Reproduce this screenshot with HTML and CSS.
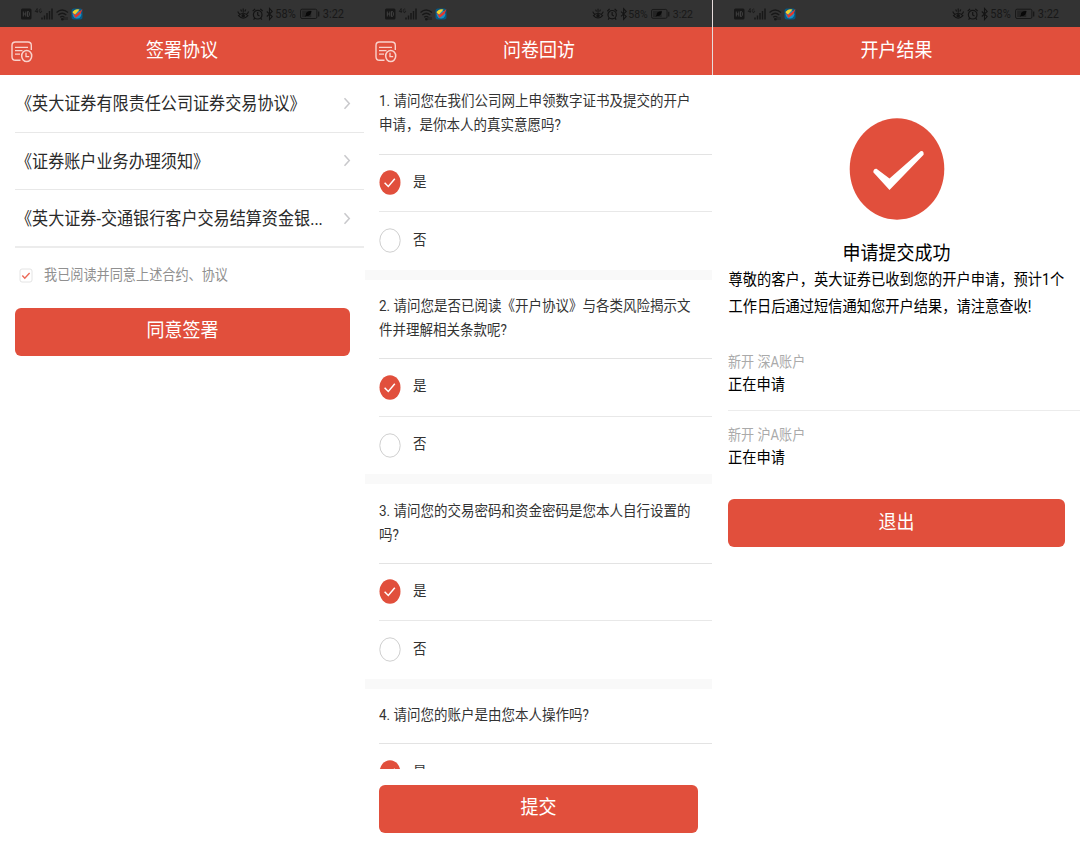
FILE: index.html
```html
<!DOCTYPE html>
<html lang="zh-CN">
<head>
    <meta charset="UTF-8">
    <meta name="viewport" content="width=device-width, initial-scale=1.0">
    <title>开户</title>
    <link rel="stylesheet" href="styles.css">
</head>
<body>

    <!-- shared icons -->
    <svg class="sprite" width="0" height="0">
        <symbol id="icon-network" viewBox="0 0 62 14">
            <rect x="0" y="1.5" width="10.500" height="11" rx="1.500" fill="#181818"/>
            <path d="M2.300 4.500v5M4.800 4.500v5M2.300 7h2.500M6.500 4.500v5h.8c1.500 0 1.500-5 0-5z" fill="none" stroke="#4a4a4a" stroke-width=".8"/>
            <path d="M16.200 1.500v4.500M16.200 1.500l-2 3h2.700M20.300 2.200c-2.200-1.400-2.800 3.200-1 3.400 1.200.1 1.300-.8 1.200-1.600h-1" fill="none" stroke="#181818" stroke-width=".8"/>
            <path d="M21 12.500v-2M23.500 12.500v-4M26 12.500v-6.500M28.500 12.500v-8.500M31 12.500v-11" stroke="#181818" stroke-width="1.500"/>
            <path d="M35.500 5.500q5.500-5 11.500 0M37.300 8q3.900-3.600 8 0M39.200 10.300q2-1.800 4.200 0" fill="none" stroke="#181818" stroke-width="1.300"/>
            <path d="M40.500 11.500h1.800v1.500h-1.800zM44 10v3M46 10v3" fill="#181818" stroke="#181818" stroke-width=".8"/>
            <rect x="50.500" y="1.500" width="11" height="11" rx="2.500" fill="#075a86"/>
            <circle cx="56" cy="7.300" r="4.300" fill="#1b8fc4"/>
            <path d="M51.500 6q1.500-4.500 7-3.500l-4.500 5z" fill="#f2d32c"/>
            <path d="M51.500 5.500l3 2.500 7-6-2 5-5 4z" fill="#e5362b"/>
        </symbol>
        <symbol id="icon-alarm" viewBox="0 0 37 14">
            <path d="M1.500 8.700q4.700-5 9.400 0-4.700 5-9.400 0zM.8 4.500q.6 2 2 2.500M11.600 4.500q-.6 2-2 2.500M3.700 2.500l.9 2M8.700 2.500l-.9 2M6.200 1.500v4" fill="none" stroke="#141414" stroke-width="1.100"/>
            <circle cx="6.200" cy="8.700" r="1.800" fill="#141414"/>
            <circle cx="20.700" cy="7.700" r="4.300" fill="none" stroke="#141414" stroke-width="1.200"/>
            <path d="M20.700 5v3l1.800 1M15.700 4.200l2.400-2.400M25.700 4.200l-2.400-2.400M17.800 11l-1.200 1.700M23.600 11l1.200 1.700" fill="none" stroke="#141414" stroke-width="1.200"/>
            <path d="M29.800 4.500l5.400 5-2.700 3v-11l2.700 3-5.400 5" fill="none" stroke="#141414" stroke-width="1.100"/>
        </symbol>
        <symbol id="icon-battery" viewBox="0 0 20 12">
            <rect x=".6" y="1.200" width="16.300" height="9.300" rx="1.500" fill="none" stroke="#181818"/>
            <path d="M2.200 2.600h9v6.500h-9z" fill="#242424"/>
            <path d="M11.500 3q-6-.2-5.600 4l-1.200 1.800 1.700-.8q4.400.6 5.100-5z" fill="#080808"/>
            <path d="M18.700 3.500v5" stroke="#181818" stroke-width="1.300"/>
        </symbol>
        <symbol id="icon-record" viewBox="0 0 22 22">
            <path d="M9.500 19.200H4.500Q1 19.200 1 15.700V4.500Q1 1 4.500 1h12.300q3.500 0 3.500 3.500V9" fill="none" stroke="#f9d3cd" stroke-width="1.400"/>
            <path d="M4 6.300h13M4 9.700h7.500M4 13.200h5" stroke="#f9d3cd" stroke-width="1.300"/>
            <ellipse cx="15.700" cy="15" rx="5" ry="5.500" fill="none" stroke="#f9d3cd" stroke-width="1.500"/>
            <path d="M15 11.800v3.800h3.200" fill="none" stroke="#f9d3cd" stroke-width="1.300"/>
        </symbol>
        <symbol id="icon-arrow" viewBox="0 0 8 13">
            <path d="M1.500 1.200l4.800 5.300-4.800 5.300" fill="none" stroke="#c8c8cb" stroke-width="1.500"/>
        </symbol>
        <symbol id="icon-on" viewBox="0 0 22 25">
            <ellipse cx="11" cy="12.500" rx="10.500" ry="12.200" fill="#e14f3c"/>
            <path d="M5.600 12.800l3.700 3.700 6.500-7.700" fill="none" stroke="#fff" stroke-width="1.500"/>
        </symbol>
        <symbol id="icon-off" viewBox="0 0 22 25">
            <ellipse cx="11" cy="12.500" rx="10.200" ry="11.700" fill="#fff" stroke="#cfcfcf"/>
        </symbol>
    </svg>

    <!-- sign agreements -->
    <section class="phone sign">
        <div class="status">
            <svg class="network"><use href="#icon-network"/></svg>
            <div class="status-right">
                <svg class="alarm" viewBox="0 0 37 14"><use href="#icon-alarm"/></svg>
                <span>58%</span>
                <svg class="battery" viewBox="0 0 20 12"><use href="#icon-battery"/></svg>
                <span>3:22</span>
            </div>
        </div>
        <header>
            <svg class="record"><use href="#icon-record"/></svg>
            <h1>签署协议</h1>
        </header>
        <ul class="agreements">
            <li><span>《英大证券有限责任公司证券交易协议》</span><svg class="arrow"><use href="#icon-arrow"/></svg></li>
            <li><span>《证券账户业务办理须知》</span><svg class="arrow"><use href="#icon-arrow"/></svg></li>
            <li><span>《英大证券-交通银行客户交易结算资金银...</span><svg class="arrow"><use href="#icon-arrow"/></svg></li>
        </ul>
        <div class="agree">
            <svg class="checkbox" viewBox="0 0 14 15">
                <rect x="1" y="1" width="12" height="13" rx="2" fill="#fff" stroke="#e4e4e4"/>
                <path d="M3.300 7.500l2.500 2.700 4.800-5.200" fill="none" stroke="#ec6a58" stroke-width="1.400"/>
            </svg>
            <span>我已阅读并同意上述合约、协议</span>
        </div>
        <button type="button"><span>同意签署</span></button>
    </section>

    <!-- questionnaire -->
    <section class="phone survey">
        <div class="status">
            <svg class="network"><use href="#icon-network"/></svg>
            <div class="status-right">
                <svg class="alarm" viewBox="0 0 37 14"><use href="#icon-alarm"/></svg>
                <span>58%</span>
                <svg class="battery" viewBox="0 0 20 12"><use href="#icon-battery"/></svg>
                <span>3:22</span>
            </div>
        </div>
        <header>
            <svg class="record"><use href="#icon-record"/></svg>
            <h1>问卷回访</h1>
        </header>
        <div class="questions">
            <div class="question">
                <h2><span>1. 请问您在我们公司网上申领数字证书及提交的开户</span><span>申请，是你本人的真实意愿吗?</span></h2>
                <div class="option"><svg class="radio"><use href="#icon-on"/></svg><span>是</span></div>
                <div class="option"><svg class="radio"><use href="#icon-off"/></svg><span>否</span></div>
            </div>
            <div class="question">
                <h2><span>2. 请问您是否已阅读《开户协议》与各类风险揭示文</span><span>件并理解相关条款呢?</span></h2>
                <div class="option"><svg class="radio"><use href="#icon-on"/></svg><span>是</span></div>
                <div class="option"><svg class="radio"><use href="#icon-off"/></svg><span>否</span></div>
            </div>
            <div class="question">
                <h2><span>3. 请问您的交易密码和资金密码是您本人自行设置的</span><span>吗?</span></h2>
                <div class="option"><svg class="radio"><use href="#icon-on"/></svg><span>是</span></div>
                <div class="option"><svg class="radio"><use href="#icon-off"/></svg><span>否</span></div>
            </div>
            <div class="question">
                <h2><span>4. 请问您的账户是由您本人操作吗?</span></h2>
                <div class="option"><svg class="radio"><use href="#icon-on"/></svg><span>是</span></div>
            </div>
        </div>
        <button type="button"><span>提交</span></button>
    </section>

    <!-- result -->
    <section class="phone result">
        <div class="status">
            <svg class="network"><use href="#icon-network"/></svg>
            <div class="status-right">
                <svg class="alarm" viewBox="0 0 37 14"><use href="#icon-alarm"/></svg>
                <span>58%</span>
                <svg class="battery" viewBox="0 0 20 12"><use href="#icon-battery"/></svg>
                <span>3:22</span>
            </div>
        </div>
        <header>
            <h1>开户结果</h1>
        </header>
        <svg class="success" viewBox="0 0 96 102">
            <ellipse cx="48" cy="51" rx="47.300" ry="50.700" fill="#e14f3c"/>
            <path d="M24.300 54.300Q24.300 50.500 27.500 50.800L40.500 60.500 71.500 33.300Q75 32.300 74.600 36.700L40.500 72z" fill="#fff"/>
        </svg>
        <h2>申请提交成功</h2>
        <p class="message"><span>尊敬的客户，英大证券已收到您的开户申请，预计1个</span><span>工作日后通过短信通知您开户结果，请注意查收!</span></p>
        <div class="account">
            <span class="name">新开 深A账户</span>
            <span class="state">正在申请</span>
        </div>
        <div class="account">
            <span class="name">新开 沪A账户</span>
            <span class="state">正在申请</span>
        </div>
        <button type="button"><span>退出</span></button>
    </section>

</body>
</html>
```
FILE: styles.css
```css
* {
    box-sizing: border-box;
}

body {
    margin: 0;
    display: flex;
    width: 1080px;
    height: 849px;
    overflow: hidden;
    background-color: #fff;
    font-family: Roboto, "Noto Sans CJK SC", sans-serif;
    color: #333;
}

.sprite {
    position: absolute;
}

h1, h2, p, ul {
    margin: 0;
    padding: 0;
    font-weight: normal;
}

svg {
    display: block;
    flex: none;
}

/* tall, narrow type */
h1,
.result h2,
.status span,
.agreements span,
.agree span,
.question span,
.message span,
.account span,
button span {
    display: block;
    white-space: nowrap;
    transform: scaleY(1.1);
}

.phone {
    height: 849px;
    display: flex;
    flex-direction: column;
    flex: none;
}

.sign {
    width: 364px;
}

.survey {
    width: 348px;
}

.result {
    width: 368px;
}

.status {
    height: 27px;
    flex: none;
    display: flex;
    justify-content: space-between;
    align-items: center;
    padding: 1px 20px 0 21px;
    background-color: #333;
    color: #181818;
    font-size: 11px;
}

.network {
    width: 62px;
    height: 14px;
}

.status-right {
    display: flex;
    align-items: center;
}

.alarm {
    width: 37px;
    height: 14px;
    margin-right: 1px;
}

.battery {
    width: 20px;
    height: 12px;
    margin: 0 3px 0 4px;
}

.survey .status {
    padding-right: 19px;
    font-size: 10.500px;
}

.survey .alarm {
    width: 36px;
    margin-right: 0;
}

.survey .battery {
    width: 19px;
    margin: 0 3px;
}

header {
    height: 48px;
    flex: none;
    display: flex;
    align-items: center;
    padding: 0 11px;
    background-color: #e14f3c;
    color: #fff;
}

header h1 {
    flex: 1;
    text-align: center;
    font-size: 18px;
    line-height: 24px;
    padding-bottom: 2px;
}

.survey header h1 {
    padding-left: 2px;
}

.record {
    width: 22px;
    height: 22px;
    margin: 2px -22px 0 0;
}

.result .status,
.result header {
    border-left: 1px solid #e6dcdb;
}

.result .status {
    padding-right: 21px;
}

button {
    height: 48px;
    flex: none;
    margin: 0 14px 0 15px;
    padding: 0 0 7px;
    border: none;
    border-radius: 6px;
    background-color: #e14f3c;
    color: #fff;
    font-family: inherit;
    font-size: 18px;
}

.agreements {
    list-style: none;
    margin-left: 15px;
}

.agreements li {
    display: flex;
    justify-content: space-between;
    align-items: center;
    height: 57.500px;
    padding: 0 13px 0 1px;
    border-bottom: 1px solid #e8e8e8;
    font-size: 16.100px;
    color: #2a2a2a;
}

.agreements span {
    padding-bottom: 2px;
}

.agreements li:last-child {
    height: 58px;
    border-bottom: 2px solid #ececec;
}

.arrow {
    width: 8px;
    height: 13px;
}

.agree {
    display: flex;
    align-items: center;
    height: 59.500px;
    padding: 0 0 8px 19px;
    font-size: 13.150px;
    color: #909090;
}

.agree span {
    padding-bottom: 1px;
}

.checkbox {
    width: 14px;
    height: 15px;
    margin: 3px 11px 0 0;
}

.questions {
    height: 694px;
    overflow: hidden;
    flex: none;
    margin-bottom: 15.500px;
}

.question {
    padding-left: 15px;
    margin-left: 1px;
    border-bottom: 10.500px solid #f9f9f9;
}

.question:last-child {
    border-bottom: none;
}

.question h2 {
    margin-left: -1px;
    padding: 14.500px 0 16px;
    border-bottom: 1.500px solid #e3e3e3;
    font-size: 13.500px;
    line-height: 24px;
}

.question:first-child h2 {
    padding: 13px 0 17.500px;
}

.option {
    display: flex;
    align-items: center;
    height: 57.500px;
    margin-left: -1px;
    border-bottom: 1px solid #e8e8e8;
    font-size: 13.500px;
}

.option span {
    padding-bottom: 4px;
}

.option:last-child {
    border-bottom: none;
}

.radio {
    width: 22px;
    height: 25px;
    margin-right: 12px;
}

.success {
    width: 96px;
    height: 102px;
    margin: 43px 135px 0 137px;
}

.result h2 {
    margin-top: 20px;
    padding-left: 1px;
    text-align: center;
    font-size: 18px;
    line-height: 26px;
    color: #000;
}

.message {
    padding: 1px 0 0 16.500px;
    font-size: 14.250px;
    line-height: 27px;
    color: #000;
    margin-bottom: 31px;
}

.account {
    margin-left: 16px;
    height: 58px;
    flex: none;
}

.account + .account {
    border-top: 1px solid #ececec;
    padding-top: 14px;
    height: 89px;
}

.account .name {
    font-size: 13.100px;
    line-height: 22px;
    color: #aaa;
}

.account .state {
    font-size: 14.250px;
    line-height: 23px;
    color: #000;
}

.result button {
    margin: 0 15px 0 16px;
}
```
